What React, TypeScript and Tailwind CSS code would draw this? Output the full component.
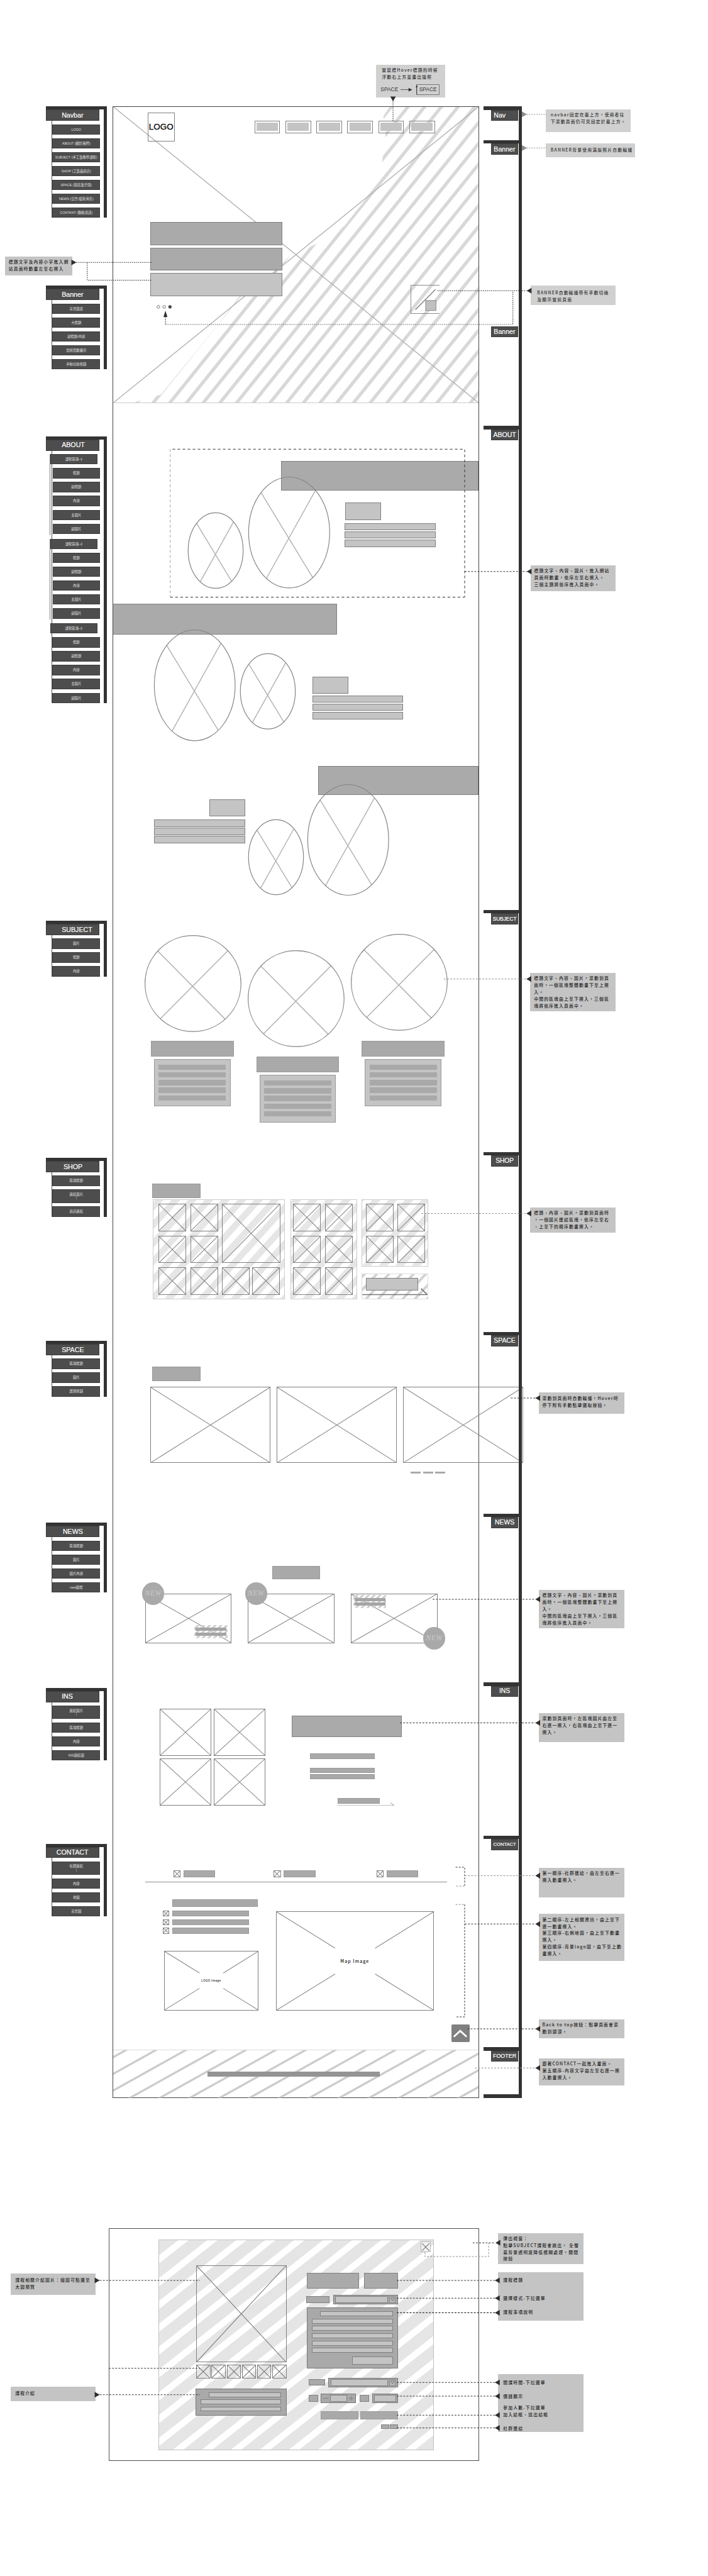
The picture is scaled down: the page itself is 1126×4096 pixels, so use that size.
import React from "react";

const SANS = "font-['Liberation_Sans','Noto_Sans_CJK_TC',sans-serif]";
const CJK = "font-['Noto_Sans_CJK_TC','Noto_Sans',sans-serif]";

/* ---------- primitives ---------- */

function Bar({ className, tone = "dark" }: { className: string; tone?: "dark" | "light" | "soft" }) {
  const tones = {
    dark: "border-[#808080] bg-[#aaaaaa]",
    light: "border-[#808080] bg-[#c4c4c4]",
    soft: "border-[#999999] bg-[#a9a9a9]",
  };
  return <div className={`shrink-0 border ${tones[tone]} ${className}`} />;
}

function Cross({ className, color = "#8c8c8c", children }: { className: string; color?: string; children?: React.ReactNode }) {
  return (
    <div className={`relative shrink-0 border border-[#808080] ${className}`}>
      <svg className="absolute inset-0 h-full w-full" viewBox="0 0 100 100" preserveAspectRatio="none">
        <path d="M0 0L100 100M100 0L0 100" stroke={color} strokeWidth="1.2" fill="none" vectorEffect="non-scaling-stroke" />
      </svg>
      {children}
    </div>
  );
}

function CutCross({ className, children }: { className: string; children: React.ReactNode }) {
  return (
    <div className={`relative flex shrink-0 items-center justify-center border border-[#808080] ${className}`}>
      <svg className="absolute inset-0 h-full w-full" viewBox="0 0 100 100" preserveAspectRatio="none">
        <path
          d="M0 0L37.3 37M100 0L62.8 37M0 100L37.3 63.2M100 100L62.8 63.2"
          stroke="#888888"
          strokeWidth="1.2"
          fill="none"
          vectorEffect="non-scaling-stroke"
        />
      </svg>
      {children}
    </div>
  );
}

function Oval({ className }: { className: string }) {
  return (
    <svg className={`relative shrink-0 overflow-visible ${className}`} viewBox="0 0 100 100" preserveAspectRatio="none" fill="none">
      <path d="M15.5 14.1L78.8 90.3M82.1 12.5L22.2 91" stroke="#b3b3b3" strokeWidth="1.6" vectorEffect="non-scaling-stroke" />
      <ellipse cx="50" cy="50" rx="49.7" ry="49.7" stroke="#858585" strokeWidth="1.3" vectorEffect="non-scaling-stroke" />
    </svg>
  );
}

function Disc({ className = "" }: { className?: string }) {
  return (
    <svg className={`h-[168.8px] w-[168.8px] shrink-0 ${className}`} viewBox="0 0 168.8 168.8" fill="none">
      <path d="M22.5 27.2L140.8 146.9M145.5 26.8L27.3 146" stroke="#b3b3b3" strokeWidth="1.7" />
      <circle cx="84.4" cy="84.4" r="83.7" stroke="#858585" strokeWidth="1.3" />
    </svg>
  );
}

type HatchProps = { w: number; h: number; pitch: number; band: number; slope: number; start: number; color: string };

function hatchPath({ w, h, pitch, band, slope, start }: HatchProps) {
  const dx = h / slope;
  let d = "";
  let x = start;
  while (x > -dx - band) x -= pitch;
  for (; x < w; x += pitch) {
    d += `M${x.toFixed(1)} ${h}h${band}L${(x + band + dx).toFixed(1)} 0h${-band}z`;
  }
  return d;
}

function Hatch(props: HatchProps) {
  return (
    <svg className="absolute inset-0 h-full w-full" viewBox={`0 0 ${props.w} ${props.h}`} preserveAspectRatio="none">
      <path d={hatchPath(props)} fill={props.color} />
    </svg>
  );
}

/* ---------- left outline ---------- */

function OutlineRow({ label, tall = false, wide = false }: { label: string; tall?: boolean; wide?: boolean }) {
  return (
    <div
      className={`flex shrink-0 flex-col items-center justify-center border border-[#3c3c3c] bg-[#4d4d4d] text-[5.9px] leading-[7px] whitespace-nowrap text-[#e2e2e2] ${
        tall ? "h-[23.2px]" : "h-[18px]"
      } ${wide ? "-ml-[4px] w-[82.2px]" : "w-[83px]"}`}
    >
      <span>{label}</span>
      {tall && <span className="leading-[6px]">⋮</span>}
    </div>
  );
}

function Outline({ title, pad, className, children }: { title: string; pad: string; className: string; children: React.ReactNode }) {
  return (
    <div className={`ml-[80.3px] w-[106.7px] shrink-0 ${className}`}>
      <div className="border-t-[6px] border-r-[5.5px] border-[#333333]">
        <div
          className={`flex h-[19.4px] w-[93.2px] items-center border border-[#3c3c3c] bg-[#4d4d4d] text-[11.7px] leading-none text-white [-webkit-text-stroke:0.2px_white] ${pad}`}
        >
          {title}
        </div>
        <div className="ml-[10.2px] flex w-[83px] flex-col gap-[6.2px] border-l border-[#555555] pt-[6px]">{children}</div>
      </div>
    </div>
  );
}

/* ---------- notes ---------- */

function Note({
  lines,
  box,
  text = "pt-[3.5px] pl-[6.3px]",
  tone = "bg-[#c4c4c4] text-[#222222]",
}: {
  lines: string[];
  box: string;
  text?: string;
  tone?: string;
}) {
  return (
    <div className={`shrink-0 text-[7.5px] leading-[12px] font-medium tracking-[1.28px] whitespace-nowrap ${CJK} ${box} ${text} ${tone}`}>
      {lines.map((l, i) => (
        <div key={i}>{l}</div>
      ))}
    </div>
  );
}

/* ---------- section rail ---------- */

function RailStop({ label, slot, size = "text-[11.6px]", tick = true }: { label: string; slot: string; size?: string; tick?: boolean }) {
  return (
    <div className={`shrink-0 ${slot}`}>
      {tick && <div className="h-[6px] w-[61.7px] bg-[#333333]" />}
      <div
        className={`ml-[12.6px] flex h-[19.2px] w-[48px] items-center border border-[#3c3c3c] bg-[#4d4d4d] leading-none text-white [-webkit-text-stroke:0.2px_white] ${size}`}
      >
        {label}
      </div>
    </div>
  );
}

function Rail() {
  return (
    <div className="relative z-10 mt-[185.9px] ml-[7.5px] flex h-[3474.4px] w-[67.2px] shrink-0 flex-col border-r-[5.5px] border-[#333333]">
      <RailStop label="Nav" slot="h-[58.4px]" size="pl-[4px] text-[11.6px]" />
      <RailStop label="Banner" slot="h-[324.9px]" size="pl-[4px] text-[11.6px]" />
      <RailStop label="Banner" slot="h-[174px]" size="pl-[4px] text-[11.6px]" tick={false} />
      <RailStop label="ABOUT" slot="h-[844.1px]" size="justify-center text-[11.6px]" />
      <RailStop label="SUBJECT" slot="h-[422.3px]" size="justify-center text-[9.1px]" />
      <RailStop label="SHOP" slot="h-[314.3px]" size="justify-center text-[11.2px]" />
      <RailStop label="SPACE" slot="h-[316.8px]" size="justify-center text-[11.4px]" />
      <RailStop label="NEWS" slot="h-[294.7px]" size="justify-center text-[11.4px]" />
      <RailStop label="INS" slot="h-[267.2px]" size="justify-center text-[11.4px]" />
      <RailStop label="CONTACT" slot="h-[368.9px]" size="justify-center text-[8.3px]" />
      <RailStop label="FOOTER" slot="h-[82.5px]" size="justify-center text-[9.8px]" />
      <div className="h-[6px] w-[61.7px] bg-[#333333]" />
    </div>
  );
}

/* ---------- page sections ---------- */

const bannerHatch: HatchProps = { w: 638, h: 517, pitch: 29.2, band: 7.4, slope: 1.243, start: 95.1, color: "#d8d8d8" };

function BannerSection() {
  return (
    <section className="relative h-[517px] shrink-0 border-b border-[#cccccc]">
      <svg className="absolute inset-0 h-full w-full" viewBox="0 0 638 517" fill="none">
        <clipPath id="banner-photo">
          <path d="M483 0L472 16L476 54L469 100L442 160L403 209L354 240L311 258L279 289L221 330L181 383L83 503L44 514L36 517H638V0Z" />
        </clipPath>
        <path d={hatchPath(bannerHatch)} fill={bannerHatch.color} clipPath="url(#banner-photo)" />
        <path d="M0 0L638 517M638 0L0 517" stroke="#b0b0b0" strokeWidth="1.5" />
      </svg>
      <div className="relative flex items-start pt-[10px] pl-[60.3px]">
        <div className="flex h-[50px] w-[46.7px] items-center justify-center border border-[#808080] text-[14.8px] leading-none text-black [-webkit-text-stroke:0.3px_black]">
          LOGO
        </div>
        <div className="mt-[14px] ml-[139.5px] flex gap-[9.3px]">
          {[0, 1, 2, 3, 4, 5].map((i) => (
            <div key={i} className="h-[21.6px] w-[44.7px] border border-[#808080] p-[2.6px]">
              <div className="h-full bg-[#c4c4c4]" />
            </div>
          ))}
        </div>
      </div>
      <div className="relative mt-[141.1px] ml-[64.7px] flex w-[230.8px] flex-col gap-[3.9px]">
        <Bar className="h-[40.6px]" />
        <Bar className="h-[40.2px]" />
        <Bar className="h-[40.2px]" tone="light" />
      </div>
      <svg className="relative mt-[15.6px] ml-[75.3px] h-[6.4px] w-[26.6px]" viewBox="0 0 26.6 6.4" fill="none" stroke="#666666">
        <circle cx="3.2" cy="3.2" r="2.5" />
        <circle cx="13.4" cy="3.2" r="2.5" />
        <circle cx="23.4" cy="3.2" r="2.5" fill="#444444" stroke="#444444" />
      </svg>
      <svg className="absolute top-[310px] left-[518.4px] h-[50.5px] w-[51.4px]" viewBox="0 0 51.4 50.5" fill="none">
        <rect x=".5" y=".5" width="50.4" height="49.5" stroke="#808080" />
        <path d="M8.3 43.3L43.5 7.8" stroke="#707070" strokeWidth="1.4" />
        <rect x="26.3" y="27.3" width="18" height="17.4" fill="#c0c0c0" stroke="#808080" />
      </svg>
    </section>
  );
}

function Lines({ className, row }: { className: string; row: string }) {
  return (
    <div className={`flex flex-col ${className}`}>
      <Bar className={row} tone="light" />
      <Bar className={row} tone="light" />
      <Bar className={row} tone="light" />
    </div>
  );
}

function AboutSection() {
  return (
    <section className="h-[883.5px] shrink-0">
      <div className="h-[349.7px] pt-[100.8px]">
        <Bar className="ml-auto h-[51.4px] w-[344.6px]" />
        <div className="-mt-[23.6px] flex items-start pl-[130.3px]">
          <Oval className="mt-[62.2px] h-[132.5px] w-[96.5px]" />
          <Oval className="ml-[9.1px] h-[194.7px] w-[142.3px]" />
          <div className="mt-[44.3px] ml-[25.5px]">
            <Bar className="ml-px h-[30.4px] w-[62.6px]" tone="light" />
            <Lines className="mt-[5.7px] gap-[1.7px]" row="h-[12.7px] w-[158.9px]" />
          </div>
        </div>
      </div>
      <div className="h-[282.8px]">
        <Bar className="h-[54.3px] w-[390px] border-l-0" />
        <div className="-mt-[9.6px] flex items-start pl-[71.4px]">
          <Oval className="h-[194.6px] w-[141.9px]" />
          <Oval className="mt-[41.7px] ml-[7.9px] h-[132.2px] w-[96.5px]" />
          <div className="mt-[82.5px] ml-[29.7px]">
            <Bar className="h-[30px] w-[62.5px]" tone="light" />
            <Lines className="mt-[2.8px] gap-[2.1px]" row="h-[12.5px] w-[158.7px]" />
          </div>
        </div>
      </div>
      <div>
        <Bar className="ml-auto h-[51.3px] w-[280px]" />
        <div className="-mt-[19.6px] flex items-start pl-[71.4px]">
          <div className="mt-[26.8px]">
            <Bar className="ml-[96.9px] h-[29.5px] w-[61.6px]" tone="light" />
            <Lines className="mt-[5.3px] gap-[1.6px]" row="h-[13px] w-[158.5px]" />
          </div>
          <Oval className="mt-[62px] ml-[6.4px] h-[131.7px] w-[96.5px]" />
          <Oval className="ml-[6.3px] h-[194.2px] w-[142.1px]" />
        </div>
      </div>
    </section>
  );
}

function SubjectCard({ card, title, body }: { card: string; title: string; body: string }) {
  return (
    <div className={`w-[168.8px] shrink-0 ${card}`}>
      <Disc />
      <Bar className={`h-[26.8px] w-[144.4px] ${title}`} tone="soft" />
      <div className={`mt-[4.9px] flex h-[82.6px] w-[133.2px] flex-col gap-[4.2px] border border-[#999999] bg-[#c4c4c4] px-[6.9px] pt-[8.4px] ${body}`}>
        {[0, 1, 2, 3, 4].map((i) => (
          <div key={i} className="h-[9.3px] bg-[#a9a9a9]" />
        ))}
      </div>
    </div>
  );
}

function SubjectSection() {
  return (
    <section className="flex h-[422.6px] shrink-0 items-start pl-[54.4px]">
      <SubjectCard card="mt-[44.5px]" title="mt-[15.6px] ml-[11.4px]" body="ml-[17px]" />
      <SubjectCard card="mt-[70.4px] ml-[11.5px]" title="mt-[17.4px] ml-[15px]" body="ml-[20.8px]" />
      <SubjectCard card="mt-[42.3px] ml-[11.3px]" title="mt-[17.8px] ml-[18.5px]" body="ml-[24.5px]" />
    </section>
  );
}

function Tiles({ count }: { count: number }) {
  return (
    <>
      {Array.from({ length: count }, (_, i) => (
        <Cross key={i} className="h-[48px] w-[48.4px]" color="#8a8a8a" />
      ))}
    </>
  );
}

function ShopSection() {
  return (
    <section className="h-[314.4px] shrink-0 pt-[55.4px]">
      <Bar className="ml-[68.2px] h-[24.6px] w-[83.8px]" tone="soft" />
      <div className="mt-[2.8px] ml-[69px] flex items-start">
        <div className="relative h-[174.3px] w-[230.9px] border border-[#cccccc] pt-[6.4px] pl-[8.9px]">
          <Hatch w={230} h={173} pitch={29} band={15} slope={1.1} start={19.6} color="#e6e6e6" />
          <div className="grid grid-cols-[56.1px_54.5px_53px_48.7px] gap-y-[7.6px]">
            <Tiles count={2} />
            <Cross className="col-span-2 row-span-2 w-[101.7px]" color="#8a8a8a" />
            <Tiles count={6} />
          </div>
        </div>
        <div className="relative ml-[9.1px] h-[174.3px] w-[116.5px] border border-[#cccccc] pt-[6.4px] pl-[3.8px]">
          <Hatch w={115} h={173} pitch={29} band={15} slope={1.1} start={19.6} color="#e6e6e6" />
          <div className="grid grid-cols-[55.7px_48px] gap-y-[7.6px]">
            <Tiles count={6} />
          </div>
        </div>
        <div className="ml-[8.2px] w-[116.3px]">
          <div className="relative h-[116.8px] border border-[#cccccc] pt-[6.4px] pl-[5.8px]">
            <Hatch w={115} h={115} pitch={29} band={15} slope={1.1} start={0} color="#e6e6e6" />
            <div className="grid grid-cols-[55px_48px] gap-y-[7.6px]">
              <Tiles count={4} />
            </div>
          </div>
          <div className="relative mt-[12.2px] h-[45.3px] border border-[#dddddd] pt-[7.2px] pl-[6.2px]">
            <Hatch w={115} h={44} pitch={21.5} band={6} slope={1.1} start={4} color="#d2d2d2" />
            <Bar className="relative h-[22px] w-[91.3px]" tone="light" />
            <svg className="absolute inset-0 h-full w-full" viewBox="0 0 114.3 43.3" fill="none" stroke="#777777" strokeWidth="1.5">
              <path d="M0 35.8H114" />
              <path d="M103 25.2L114 35.8" strokeWidth="2" />
            </svg>
          </div>
        </div>
      </div>
    </section>
  );
}

function SpaceSection() {
  return (
    <section className="h-[316.7px] shrink-0 pt-[60.3px]">
      <Bar className="ml-[68.2px] h-[24.5px] w-[83.8px]" tone="soft" />
      <div className="mt-[10.2px] ml-[64.3px] flex gap-[10.7px]">
        <Cross className="h-[133.4px] w-[210px]" />
        <Cross className="h-[133.4px] w-[210px]" />
        <Cross className="h-[133.4px] w-[210px]" />
      </div>
      <div className="mt-[15.2px] ml-[519.1px] flex gap-[4px]">
        <i className="h-[3.4px] w-[17.5px] bg-[#aaaaaa]" />
        <i className="h-[3.4px] w-[17.5px] bg-[#aaaaaa]" />
        <i className="h-[3.4px] w-[17.5px] bg-[#aaaaaa]" />
      </div>
    </section>
  );
}

function NewBadge({ className }: { className: string }) {
  return (
    <div
      className={`absolute flex h-[39.8px] w-[38.2px] items-center justify-center rounded-full bg-[#a9a9a9] font-['Liberation_Serif',serif] text-[13px] leading-none tracking-[0.6px] text-[#c9c9c9] italic ${className}`}
    >
      NEW
    </div>
  );
}

function NewsCaption({ className }: { className: string }) {
  return (
    <div className={`absolute h-[22.7px] w-[57.7px] ${className}`}>
      <Hatch w={57.7} h={22.7} pitch={10} band={5} slope={1} start={2} color="#cfcfcf" />
      <div className="relative flex flex-col gap-[3.2px] px-[2px] pt-[4.6px]">
        <div className="h-[5.4px] bg-[#a5a5a5]" />
        <div className="h-[5.4px] bg-[#a5a5a5]" />
      </div>
    </div>
  );
}

function NewsSection() {
  return (
    <section className="h-[294.7px] shrink-0 pt-[91.1px]">
      <Bar className="ml-[277px] h-[23.4px] w-[83.8px]" tone="soft" />
      <div className="mt-[24.9px] ml-[55.5px] flex gap-[29px]">
        <Cross className="h-[86.4px] w-[150.7px]">
          <NewBadge className="-top-[21px] -left-[5.7px]" />
          <NewsCaption className="top-[54px] left-[85.3px]" />
        </Cross>
        <Cross className="h-[86.4px] w-[150.7px]">
          <NewBadge className="-top-[21px] -left-[6.2px]" />
        </Cross>
        <Cross className="h-[86.4px] w-[150.7px]">
          <NewsCaption className="top-[1.7px] left-[2.9px]" />
          <NewBadge className="top-[57.3px] left-[125px]" />
        </Cross>
      </div>
    </section>
  );
}

function InsSection() {
  return (
    <section className="flex h-[267.2px] shrink-0 items-start">
      <div className="mt-[45.6px] ml-[80.9px] grid grid-cols-[90.1px_90.1px] gap-x-[4px] gap-y-[4.7px]">
        <Cross className="h-[82.3px]" />
        <Cross className="h-[82.3px]" />
        <Cross className="h-[82.3px]" />
        <Cross className="h-[82.3px]" />
      </div>
      <div className="mt-[57.6px] ml-[45.9px]">
        <Bar className="h-[37.5px] w-[192.3px]" />
        <Bar className="mt-[28.8px] ml-[32.5px] h-[9.3px] w-[112.4px]" tone="soft" />
        <Bar className="mt-[16.1px] ml-[32.5px] h-[8.7px] w-[112.4px]" tone="soft" />
        <Bar className="mt-[2px] ml-[32.5px] h-[8.1px] w-[112.4px]" tone="soft" />
        <Bar className="mt-[33.5px] ml-[81px] h-[9.3px] w-[73px]" tone="soft" />
        <svg className="-mt-[2px] ml-[79.5px] h-[6px] w-[100.6px]" viewBox="0 0 100.6 6" fill="none" stroke="#808080">
          <path d="M0 5.5H100L93.5 .5" />
        </svg>
      </div>
    </section>
  );
}

function ContactSection() {
  return (
    <section className="h-[373.6px] shrink-0 pt-[60.2px]">
      <div className="ml-[105.4px] flex">
        {["w-[174.8px]", "w-[179.6px]", "w-[73px]"].map((w) => (
          <div key={w} className={`flex gap-[5px] ${w}`}>
            <Cross className="h-[12.2px] w-[12.2px]" />
            <Bar className="h-[12.2px] w-[55.6px]" tone="soft" />
          </div>
        ))}
      </div>
      <div className="mt-[8px] ml-[55.5px] h-px w-[527px] bg-[#8c8c8c]" />
      <div className="flex items-start pl-[86.8px]">
        <div className="mt-[29.7px] w-[166.5px]">
          <Bar className="ml-[16.7px] h-[12.7px] w-[149px]" tone="soft" />
          <div className="mt-[6.7px] flex flex-col gap-[4.7px]">
            {[0, 1, 2].map((i) => (
              <div key={i} className="flex gap-[6px]">
                <Cross className="h-[10.3px] w-[10.7px]" />
                <Bar className="h-[10.3px] w-[133.6px]" tone="soft" />
              </div>
            ))}
          </div>
          <CutCross className="mt-[30.5px] ml-[1.6px] h-[104px] w-[164.9px]">
            <span className="font-['Open_Sans','Noto_Sans',sans-serif] text-[5.2px] leading-none font-semibold tracking-[0.3px] text-[#333333]">LOGO Image</span>
          </CutCross>
        </div>
        <CutCross className="mt-[50.6px] ml-[30.4px] h-[173.5px] w-[275.8px]">
          <span className={`text-[7.8px] leading-none font-medium tracking-[1.1px] text-[#222222] ${CJK}`}>Map Image</span>
        </CutCross>
      </div>
      <div className="mt-[24px] ml-[590.3px] flex h-[30.8px] w-[31.2px] items-center justify-center rounded-[2px] bg-[#808080]">
        <svg className="h-[14px] w-[24px]" viewBox="0 0 24 14" fill="none" stroke="#ffffff" strokeWidth="3" strokeLinecap="round">
          <path d="M1.8 11.8L12 2.4L22.2 11.8" />
        </svg>
      </div>
    </section>
  );
}

function FooterSection() {
  return (
    <section className="relative h-[84px] shrink-0 border-t border-[#dddddd] pt-[36.5px]">
      <Hatch w={638} h={83} pitch={52.2} band={7.6} slope={0.558} start={26} color="#cccccc" />
      <div className="relative ml-[164.7px] h-[8.7px] w-[300.7px] bg-[#949494]" />
    </section>
  );
}

/* ---------- popup ---------- */

function Select({ className }: { className: string }) {
  return (
    <div className={`flex h-[16.7px] items-center gap-[2.8px] border border-[#777777] bg-[#a9a9a9] px-[3px] ${className}`}>
      <Bar className="h-[11.3px] flex-1" tone="light" />
      <div className="flex h-[11.3px] w-[11px] items-center justify-center border border-[#878787] bg-[#b8b8b8]">
        <svg className="h-[7px] w-[7px]" viewBox="0 0 7 7" fill="none" stroke="#777777">
          <path d="M.6 .8H6.4L3.5 6.2Z" />
        </svg>
      </div>
    </div>
  );
}

function Popup() {
  return (
    <div className="h-[406px] w-[646.7px] shrink-0 border border-[#505050]">
      <div className="relative mt-[18px] ml-[85.6px] flex h-[367.6px] w-[480.2px] items-start border border-[#c0c0c0]">
        <Hatch w={478.2} h={365.6} pitch={50.6} band={32.4} slope={0.787} start={42.5} color="#e5e5e5" />
        <div className="relative mt-[44.3px] ml-[65px] w-[157.4px] shrink-0">
          <Cross className="h-[169.3px] border-[#777777]" color="#777777" />
          <div className="mt-[4.4px] flex justify-between">
            {[0, 1, 2, 3, 4, 5].map((i) => (
              <Cross key={i} className="h-[24px] w-[24.5px] border-[#777777]" color="#777777" />
            ))}
          </div>
          <div className="mt-[17.3px] -ml-[1.2px] flex h-[46.7px] w-[158.6px] flex-col gap-[4.2px] border border-[#777777] bg-[#a9a9a9] pt-[5.3px] pr-[8px] pl-[8px]">
            <Bar className="ml-[14px] h-[8.4px]" tone="light" />
            <Bar className="h-[8.4px]" tone="light" />
            <Bar className="h-[8.4px]" tone="light" />
          </div>
        </div>
        <div className="relative mt-[57.6px] ml-[35.2px] w-[159.5px] shrink-0">
          <div className="flex justify-between">
            <Bar className="h-[26.7px] w-[91px] border-[#777777]" />
            <Bar className="h-[26.7px] w-[59.3px] border-[#777777]" />
          </div>
          <div className="mt-[11.3px] flex items-center justify-between">
            <Bar className="-ml-[0.8px] h-[11px] w-[40.8px]" />
            <Select className="w-[113.6px]" />
          </div>
          <div className="mt-[5.3px] flex h-[106.4px] flex-col gap-[4.1px] border border-[#777777] bg-[#a9a9a9] pt-[5.7px] pr-[8.1px] pl-[7.7px]">
            <Bar className="ml-[14.6px] h-[8.7px]" tone="light" />
            <Bar className="h-[8.7px]" tone="light" />
            <Bar className="h-[8.7px]" tone="light" />
            <Bar className="h-[8.7px]" tone="light" />
            <Bar className="h-[8.7px]" tone="light" />
            <Bar className="h-[8.7px]" tone="light" />
            <Bar className="mt-[2.5px] ml-auto h-[13.7px] w-[71px]" tone="light" />
          </div>
          <div className="mt-[16.3px] ml-[3.2px] flex items-center justify-between">
            <Bar className="h-[11px] w-[28.8px]" />
            <Select className="w-[121.9px]" />
          </div>
          <div className="mt-[10.6px] ml-[3.2px] flex h-[17px] items-center">
            <Bar className="h-[11.4px] w-[16.6px]" />
            <div className="ml-[4.7px] flex h-[17px] w-[61.1px] items-center justify-between border border-[#777777] bg-[#a9a9a9] px-[3px]">
              <i className="h-px w-[9px] bg-[#808080]" />
              <Bar className="ml-px h-[12px] w-[29.7px]" tone="light" />
              <svg className="h-[8px] w-[8px]" viewBox="0 0 8 8" stroke="#808080">
                <path d="M0 4H8M4 0V8" />
              </svg>
            </div>
            <Bar className="ml-[6.3px] h-[11.4px] w-[17px]" />
            <div className="ml-[5.1px] flex h-[17px] w-[45.5px] items-center justify-center border border-[#777777] bg-[#a9a9a9]">
              <Bar className="h-[12px] w-[38px]" tone="light" />
            </div>
          </div>
          <div className="mt-[14px] ml-[24.5px] flex justify-between">
            <Bar className="h-[14px] w-[65.4px]" tone="soft" />
            <Bar className="h-[14px] w-[66px]" tone="soft" />
          </div>
          <div className="mt-[8.7px] flex justify-end gap-[1.2px]">
            <Bar className="h-[8.5px] w-[14.3px]" />
            <Bar className="h-[8.5px] w-[14.6px]" />
          </div>
        </div>
        <div className="absolute top-[2.6px] left-[455.9px] h-[18.6px] w-[18.4px] border border-[#b5b5b5] bg-[#f2f2f2] p-[1.6px]">
          <svg className="h-full w-full" viewBox="0 0 14 14" stroke="#707070" strokeWidth="1.3">
            <path d="M0 0L14 14M14 0L0 14" />
          </svg>
        </div>
      </div>
    </div>
  );
}

/* ---------- leader lines ---------- */

const left = (x: number, y: number) => `M${x} ${y}l8.5 -5v10z`;
const right = (x: number, y: number) => `M${x} ${y}l-8.8 -5v10z`;

function Leaders() {
  return (
    <svg className="pointer-events-none absolute inset-0 z-20 h-full w-full" viewBox="0 0 1235 4494" fill="none" strokeWidth="1.1">
      <g stroke="#333333" strokeDasharray="2 1.6">
        <path d="M133 457.8H264.5M152.2 458V488.8H264.5" />
        <path d="M685.8 177V211.6M288.7 553V566M763.3 507.1H919M895 509V566" />
      </g>
      <path d="M288.7 566H895" stroke="#8c8c8c" strokeDasharray="2 1.6" />
      <path d="M919 199.4H954M919 258.2H954" stroke="#9a9a9a" strokeDasharray="2.4 1.8" />
      <g stroke="#333333" strokeDasharray="4.6 4.2">
        <path d="M301 783.6H810.8V1041.8M297 1041.8H810.8" />
      </g>
      <path d="M297 783.6V1041.8" stroke="#a0a0a0" strokeDasharray="4.6 4.2" />
      <g stroke="#333333" strokeDasharray="3.2 2.4">
        <path d="M811 997.1H919M891.4 2439H934M755 2790H934M698 3005.7H934M811 3356.6H934M815.5 3539.4H934" />
        <path d="M795 3257.5H810.8V3290.3M810.8 3322.4V3518.6H796" />
        <path d="M174 3978.3H348.8M190 4131.7H348.8M174 4177.7H348.8" />
        <path d="M825 3912.7H864M692.5 3978.3H864M692.5 4009.3H864M692.5 4034.7H864M692.5 4156.3H864M692.5 4180.3H864M692.5 4213.3H864M692.5 4235.7H864" />
      </g>
      <g stroke="#909090" strokeDasharray="3.2 2.4">
        <path d="M774.4 1707.9H919M735.2 2116.9H919M811 3272.2H934M829 3607.7H934" />
        <path d="M796 3290.3H810.8M795 3322.4H810.8M741.6 3929V3936.7H852.7V3912.7" />
      </g>
      <g fill="#2e2e2e">
        <path d={right(133.3, 457.8) + left(919, 507.1) + left(919, 997.1) + left(918.5, 1707.9) + left(918.5, 2116.9)} />
        <path d={left(934, 2439) + left(934, 2790) + left(934, 3005.7) + left(934, 3272.2) + left(934, 3356.6) + left(934, 3539.4) + left(934, 3607.7)} />
        <path d={right(174, 3978.3) + right(174, 4177.7) + left(864.5, 3912.7)} />
        <path
          d={
            left(863.5, 3978.3) + left(863.5, 4009.3) + left(863.5, 4034.7) + left(863.5, 4156.3) + left(863.5, 4180.3) + left(863.5, 4213.3) + left(863.5, 4235.7)
          }
        />
        <path d="M288.7 542l3.4 11h-6.8zM681 168.4h9.6L685.8 177z" />
      </g>
      <path d={right(919.5, 199.4) + right(919.5, 258.2)} fill="#8c8c8c" />
    </svg>
  );
}

/* ---------- canvas ---------- */

const pale = "bg-[#d0d0d0] text-[#333333]";

export default function App() {
  return (
    <div className={`relative flex h-[4494px] w-[1235px] flex-col bg-white [zoom:0.91144] ${SANS}`}>
      <div className="flex h-[3887.7px] shrink-0 items-start">
        <div className="flex w-[196.5px] shrink-0 flex-col pt-[185.9px]">
          <Outline title="Navbar" pad="pl-[26.3px]" className="h-[262.1px]">
            <OutlineRow label="LOGO" />
            <OutlineRow label="ABOUT (關於我們)" />
            <OutlineRow label="SUBJECT (手工藝教學課程)" />
            <OutlineRow label="SHOP (工藝品商店)" />
            <OutlineRow label="SPACE (環境及空間)" />
            <OutlineRow label="NEWS (公告/最新消息)" />
            <OutlineRow label="CONTANT (聯絡資訊)" />
          </Outline>
          <div className="h-[50.6px] shrink-0 pl-[9px]">
            <Note lines={["標題文字及內容小字進入網", "站頁面時動畫左至右擦入"]} box="h-[33px] w-[117.5px]" text="pt-[2.6px] pl-[6px]" />
          </div>
          <Outline title="Banner" pad="pl-[26.3px]" className="h-[262.8px]">
            <OutlineRow label="背景圖案" />
            <OutlineRow label="大標題" />
            <OutlineRow label="副標題/內容" />
            <OutlineRow label="當前頁數顯示" />
            <OutlineRow label="手動切換按鈕" />
          </Outline>
          <Outline title="ABOUT" pad="pl-[26.3px]" className="h-[845.1px]">
            {["課程區塊–1", "課程區塊–2", "課程區塊–2"].map((g, i) => (
              <div key={i} className={`flex flex-col gap-[6.3px] ${i < 2 ? "-ml-[5px] border-l border-[#777777] pb-[2px] pl-[4px]" : ""}`}>
                <OutlineRow label={g} wide />
                <OutlineRow label="標題" />
                <OutlineRow label="副標題" />
                <OutlineRow label="內容" />
                <OutlineRow label="主圖片" />
                <OutlineRow label="副圖片" />
              </div>
            ))}
          </Outline>
          <Outline title="SUBJECT" pad="pl-[26.3px]" className="h-[413.7px]">
            <OutlineRow label="圖片" />
            <OutlineRow label="標題" />
            <OutlineRow label="內容" />
          </Outline>
          <Outline title="SHOP" pad="pl-[29.4px]" className="h-[319.2px]">
            <OutlineRow label="區塊標題" />
            <OutlineRow label="連結圖片" tall />
            <OutlineRow label="商店連結" />
          </Outline>
          <Outline title="SPACE" pad="pl-[26.3px]" className="h-[317.4px]">
            <OutlineRow label="區塊標題" />
            <OutlineRow label="圖片" />
            <OutlineRow label="選擇按鈕" />
          </Outline>
          <Outline title="NEWS" pad="pl-[28.2px]" className="h-[287.9px]">
            <OutlineRow label="區塊標題" />
            <OutlineRow label="圖片" />
            <OutlineRow label="圖片內容" />
            <OutlineRow label="new圖標" />
          </Outline>
          <Outline title="INS" pad="pl-[26.3px]" className="h-[271.9px]">
            <OutlineRow label="連結圖片" tall />
            <OutlineRow label="區塊標題" />
            <OutlineRow label="內容" />
            <OutlineRow label="INS連結圖" />
          </Outline>
          <Outline title="CONTACT" pad="pl-[17.2px]" className="h-[140px]">
            <OutlineRow label="社群連結" tall />
            <OutlineRow label="內容" />
            <OutlineRow label="地圖" />
            <OutlineRow label="背景圖" />
          </Outline>
        </div>

        <div className="w-[640px] shrink-0 pt-[112.9px]">
          <div className={`ml-[459.6px] h-[57.5px] w-[120.7px] pt-[3.8px] pl-[10.3px] ${pale}`}>
            <div className={`text-[7.5px] leading-[12.2px] font-medium tracking-[1.28px] whitespace-nowrap ${CJK}`}>
              <div>當鼠標Hover標題的時候</div>
              <div>浮動右上方並畫出邊框</div>
            </div>
            <div className="mt-[5.6px] -ml-[2.3px] flex h-[19.3px] items-center text-[9.3px] leading-none">
              <span>SPACE</span>
              <svg className="ml-[4px] h-[8px] w-[21px]" viewBox="0 0 21 8" fill="#333333">
                <path d="M0 3.5H14V.8L20.5 4L14 7.2V4.5H0z" />
              </svg>
              <span className="relative ml-[6.5px] flex h-[19px] w-[41px] items-center justify-center border border-[#777777]">
                SPACE
                <svg className="absolute top-0 -left-[2.5px] h-[17px] w-[4px]" viewBox="0 0 4 17" fill="#333333">
                  <path d="M2 0L4 4H2.5V17H1.5V4H0z" />
                </svg>
              </span>
            </div>
          </div>
          <main className="mt-[15.1px] flex h-[3475px] w-[640px] flex-col border border-[#444444]">
            <BannerSection />
            <AboutSection />
            <SubjectSection />
            <ShopSection />
            <SpaceSection />
            <NewsSection />
            <InsSection />
            <ContactSection />
            <FooterSection />
          </main>
        </div>

        <Rail />

        <div className="flex shrink-0 flex-col pt-[191px]">
          <div className="h-[59px] pl-[40.7px]">
            <Note lines={["navbar固定在最上方，使用者往", "下滾動頁面仍可見固定於最上方。"]} box="h-[39.4px] w-[148.7px]" text="pt-[3.6px] pl-[9.1px]" tone={pale} />
          </div>
          <div className="h-[248.6px] pl-[40.7px]">
            <Note lines={["BANNER背景使用滿版照片自動輪播"]} box="h-[24px] w-[155.8px]" text="pt-[6.2px] pl-[9.1px]" tone={pale} />
          </div>
          <div className="h-[487.8px] pl-[14.6px]">
            <Note lines={["BANNER自動輪播帶有手動切換", "及顯示當前頁面"]} box="h-[33.8px] w-[148.7px]" text="pt-[6.2px] pl-[11.5px]" tone={pale} />
          </div>
          <div className="h-[710.6px] pl-[14.6px]">
            <Note lines={["標題文字、內容、圖片，進入網站", "頁面時動畫，依序左至右擦入。", "三個主題將依序進入頁面中。"]} box="h-[44.6px] w-[148.7px]" />
          </div>
          <div className="h-[409.3px] pl-[14.2px]">
            <Note
              lines={["標題文字、內容、圖片，滾動到頁", "面時，一個區塊整體動畫下至上擦", "入。", "中間的區塊由上至下擦入，三個區", "塊將依序進入頁面中。"]}
              box="h-[67px] w-[148.7px]"
            />
          </div>
          <div className="h-[323.3px] pl-[14.2px]">
            <Note lines={["標題、內容、圖片，滾動到頁面時", "，一個圖片連結區塊，依序左至右", "、上至下的順序動畫擦入。"]} box="h-[44px] w-[148.7px]" />
          </div>
          <div className="h-[343.7px] pl-[28.8px]">
            <Note lines={["滾動到頁面時自動輪播，Hover時", "停下附有手動點擊選取按鈕。"]} box="h-[37.4px] w-[149px]" />
          </div>
          <div className="h-[215.7px] pl-[28.8px]">
            <Note
              lines={["標題文字、內容、圖片，滾動到頁", "面時，一個區塊整體動畫下至上擦", "入。", "中間的區塊由上至下擦入，三個區", "塊將依序進入頁面中。"]}
              box="h-[67px] w-[149px]"
            />
          </div>
          <div className="h-[269.8px] pl-[28.8px]">
            <Note lines={["滾動到頁面時，左區塊圖片由左至", "右逐一擦入，右區塊由上至下逐一", "擦入。"]} box="h-[50px] w-[149px]" />
          </div>
          <div className="h-[80.4px] pl-[28.8px]">
            <Note lines={["第一順序-社群連結，由左至右逐一", "擦入動畫擦入。"]} box="h-[51px] w-[149px]" />
          </div>
          <div className="h-[183.5px] pl-[28.8px]">
            <Note
              lines={["第二順序-左上相關資訊，由上至下", "逐一動畫擦入。", "第三順序-右側地圖，由上至下動畫", "擦入。", "第四順序-背景logo圖，由下至上動", "畫擦入。"]}
              box="h-[81.7px] w-[149px]"
            />
          </div>
          <div className="h-[68.3px] pl-[28.8px]">
            <Note lines={["Back to top按鈕：點擊頁面會滾", "動到頭頂。"]} box="h-[33.3px] w-[149px]" />
          </div>
          <div className="pl-[28.8px]">
            <Note lines={["跟著CONTACT一起進入畫面。", "第五順序-內容文字由左至右逐一擦", "入動畫擦入。"]} box="h-[47.5px] w-[149px]" />
          </div>
        </div>
      </div>

      <div className="flex items-start">
        <div className="flex w-[189.8px] shrink-0 flex-col gap-[160.3px] pt-[78.3px] pl-[18.2px]">
          <Note lines={["課程相關介紹圖片：縮圖可點選至", "大圖預覽"]} box="h-[37.7px] w-[148.7px]" text="pt-[6px] pl-[8.3px]" />
          <Note lines={["課程介紹"]} box="h-[25px] w-[148.7px]" text="pt-[5px] pl-[8.3px]" />
        </div>
        <Popup />
        <div className="flex flex-col pt-[8px] pl-[32.8px]">
          <Note
            lines={["彈出視窗：", "點擊SUBJECT課程會跳出， 全螢", "幕背景透明度降低模糊處理，關閉", "按鈕"]}
            box="h-[54.3px] w-[148.7px]"
            text="pt-[3.3px] pl-[8.7px]"
          />
          <div className={`mt-[14.3px] h-[84.7px] w-[148.7px] bg-[#c4c4c4] pt-[7.7px] pl-[8.7px] text-[7.5px] leading-[12px] font-medium tracking-[1.28px] text-[#222222] ${CJK}`}>
            <div>課程標題</div>
            <div className="mt-[19.3px]">選擇樣式-下拉選單</div>
            <div className="mt-[12px]">課程事項說明</div>
          </div>
          <div className={`mt-[93px] h-[101.3px] w-[148.7px] bg-[#c4c4c4] pt-[8.7px] pl-[8.7px] text-[7.5px] leading-[12px] font-medium tracking-[1.28px] text-[#222222] ${CJK}`}>
            <div>開課時間-下拉選單</div>
            <div className="mt-[12px]">價錢顯示</div>
            <div className="mt-[7.6px]">參加人數-下拉選單</div>
            <div>加入結帳、送出結帳</div>
            <div className="mt-[12px]">社群連結</div>
          </div>
        </div>
      </div>
      <Leaders />
    </div>
  );
}
